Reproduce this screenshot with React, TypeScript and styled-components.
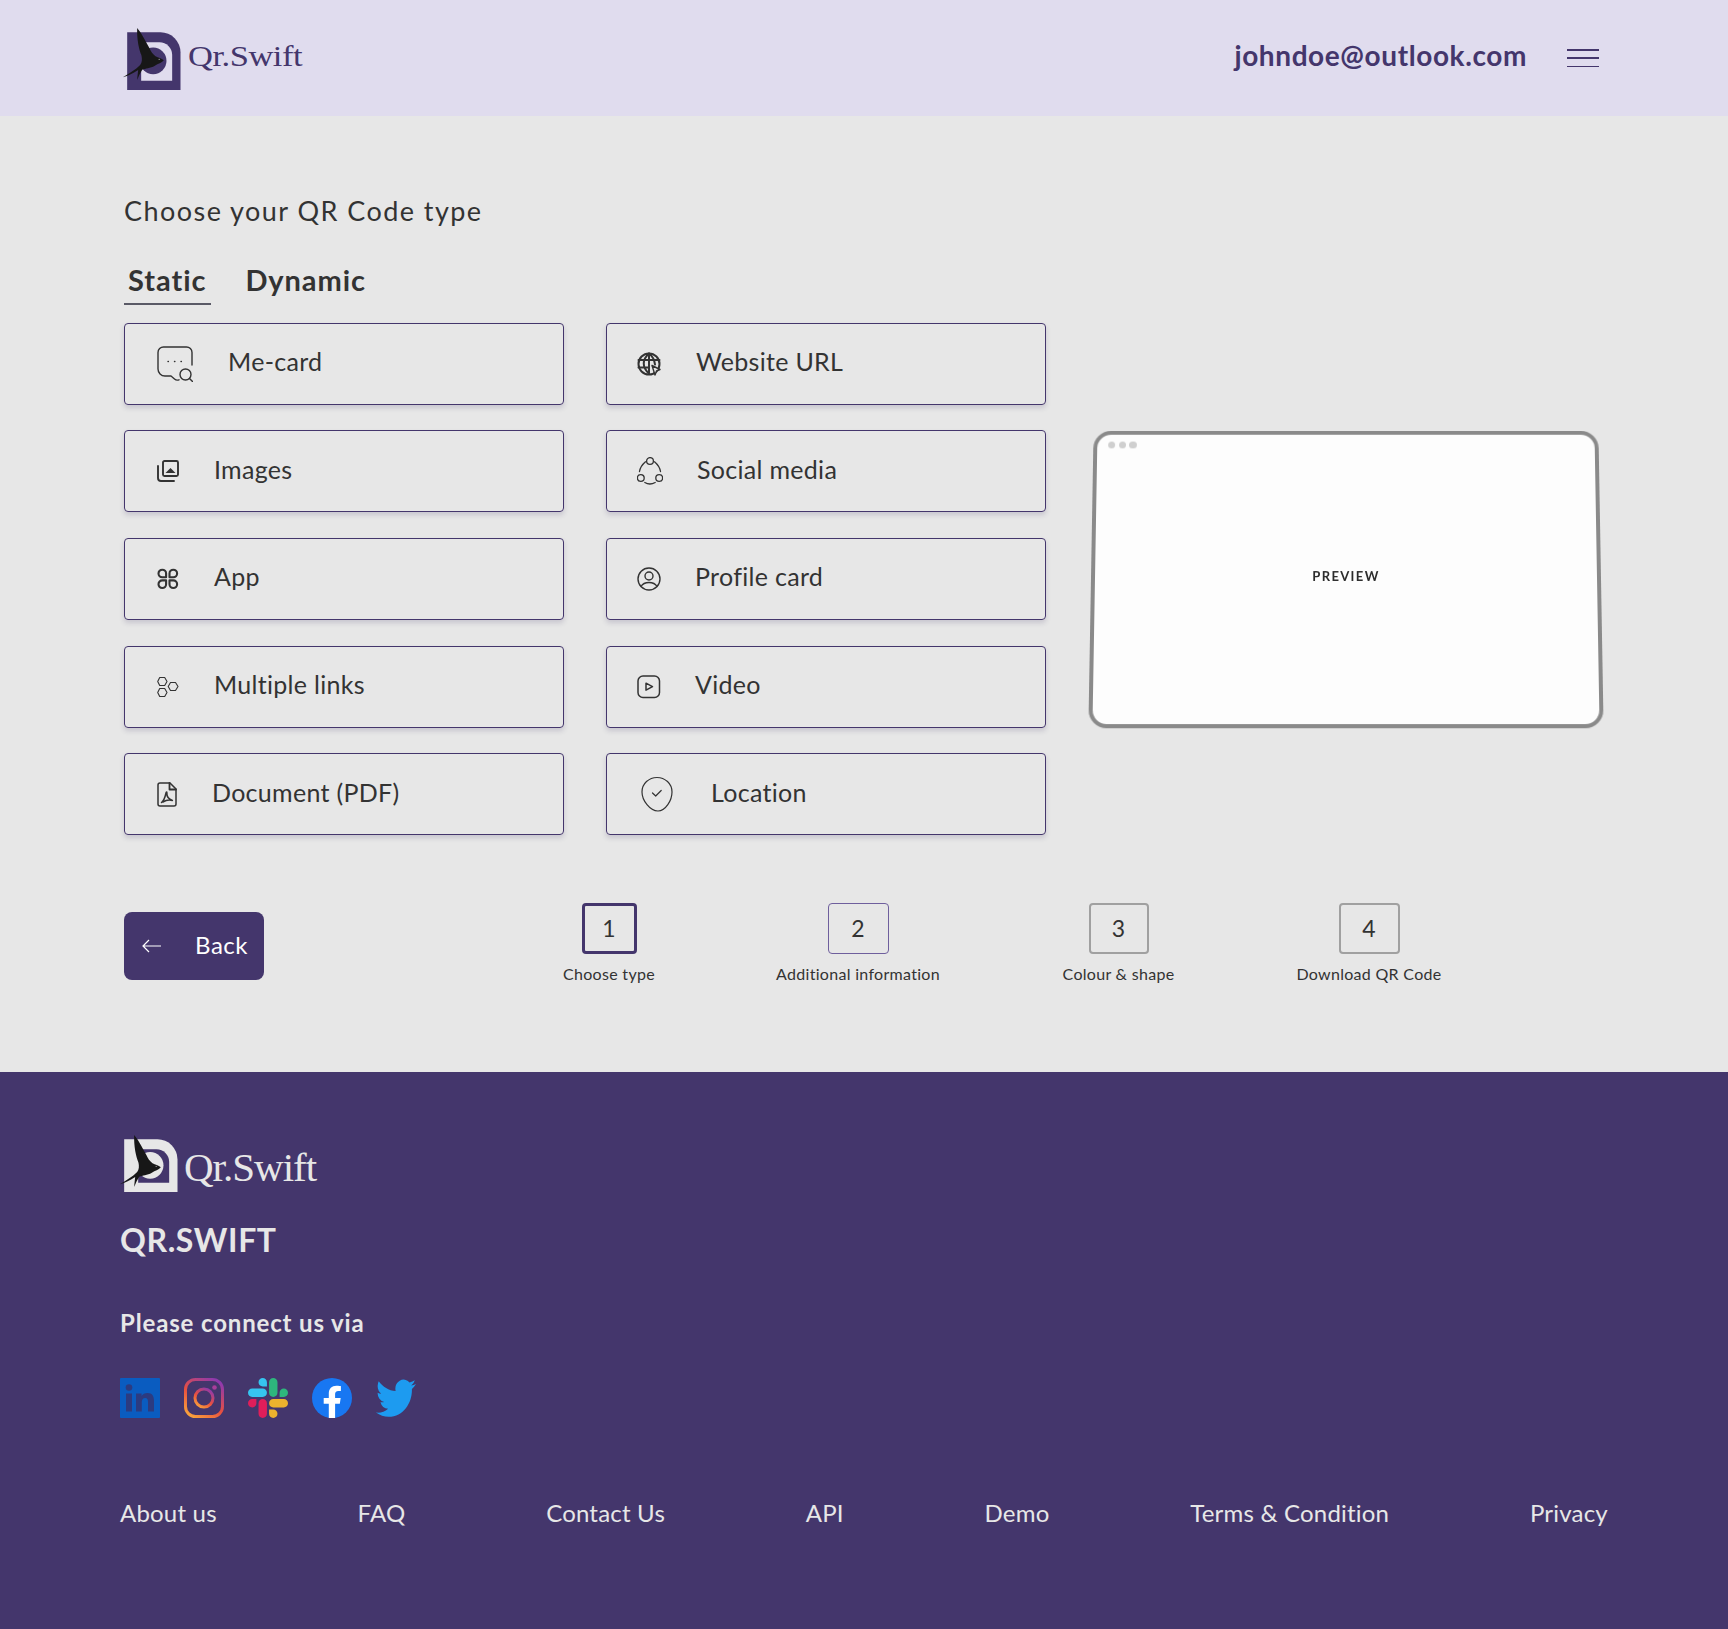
import React from "react";
import styled, { createGlobalStyle } from "styled-components";

const PURPLE = "#44366c";
const INK = "#333333";
const FONT = `Lato, "Open Sans", sans-serif`;

const Global = createGlobalStyle`
	html, body { margin: 0; padding: 0; background: #e7e7e7; }
	body { font-family: ${FONT}; color: ${INK}; }
	* { box-sizing: border-box; }
`

const Page = styled.div`
	width: 1728px;
	height: 1629px;
	display: flex;
	flex-direction: column;
	overflow: hidden;
`

const Header = styled.header`
	height: 116px;
	background: #e0dcee;
	display: flex;
	align-items: center;
	justify-content: space-between;
	padding: 0 129px 0 122px;
`

const LogoRow = styled.div`
	display: flex;
	align-items: center;
	margin-top: 1px;
`

const HeaderBrand = styled.span`
	display: inline-block;
	font-family: "Liberation Serif", serif;
	font-size: 29px;
	letter-spacing: -0.4px;
	color: ${PURPLE};
	margin: -5px 0 0 7px;
	transform: scaleX(1.19);
	transform-origin: left center;
`

const Account = styled.div`
	display: flex;
	align-items: center;
	gap: 40px;
`

const Email = styled.span`
	font-size: 28px;
	font-weight: 700;
	letter-spacing: 0.6px;
	color: ${PURPLE};
	margin-top: -7px;
`

const Burger = styled.div`
	width: 32px;
	height: 18px;
	display: flex;
	flex-direction: column;
	justify-content: space-between;
	span {
		display: block;
		height: 1.5px;
		background: ${PURPLE};
	}
`

const Main = styled.main`
	flex: 1;
	padding: 76px 0 0 124px;
`

const Title = styled.h1`
	margin: 0;
	font-size: 27px;
	line-height: 38px;
	font-weight: 400;
	letter-spacing: 1.45px;
`

const Tabs = styled.div`
	display: flex;
	gap: 30px;
	margin-top: 31px;
`

const Tab = styled.div<{ $active?: boolean }>`
	font-size: 29px;
	line-height: 38px;
	font-weight: 700;
	padding: 0 5px 4px 4px;
	letter-spacing: 0.95px;
	border-bottom: 2px solid ${p => (p.$active ? "#5a5a66" : "transparent")};
`

const Body = styled.div`
	display: flex;
	margin-top: 17.500px;
`

const TypeGrid = styled.div`
	display: grid;
	grid-template-columns: 440px 440px;
	grid-auto-rows: 82px;
	column-gap: 42px;
	row-gap: 25.700px;
`

const TypeCard = styled.div`
	display: flex;
	align-items: center;
	gap: 35px;
	padding: 0 0 0 32px;
	border: 1px solid ${PURPLE};
	border-radius: 4px;
	box-shadow: 0 3px 5px rgba(60, 50, 100, 0.18);
	font-size: 25px;
	letter-spacing: 0.3px;
	span { margin-top: -5px; }
	&:nth-child(even) {
		gap: 34px;
		padding-left: 30px;
	}
`

const PreviewWrap = styled.div`
	margin: 105.500px 0 0 45px;
`

const Preview = styled.div`
	position: relative;
	width: 510px;
	height: 300px;
	border: 4px solid #8a8a8a;
	border-radius: 18px;
	background: #fdfdfd;
	transform: perspective(2000px) rotateX(7.800deg);
	display: flex;
	align-items: center;
	justify-content: center;
	padding-bottom: 5px;
	font-size: 13px;
	font-weight: 700;
	letter-spacing: 1.350px;
	color: #2b2b2b;
`

const WindowDots = styled.div`
	position: absolute;
	top: 7px;
	left: 11px;
	display: flex;
	gap: 3.300px;
	i {
		width: 7.400px;
		height: 7.400px;
		border-radius: 50%;
		background: #cfcfcf;
	}
`

const Footbar = styled.div`
	display: flex;
	padding-top: 67.500px;
`

const BackButton = styled.div`
	width: 140px;
	height: 68px;
	margin-top: 9.500px;
	background: ${PURPLE};
	border-radius: 8px;
	color: #fff;
	display: flex;
	align-items: center;
	justify-content: space-between;
	padding: 0 16px 0 18px;
	font-size: 24px;
	letter-spacing: 0.5px;
`

const BackLabel = styled.span`
	margin-top: -4px;
`

const Steps = styled.div`
	display: flex;
	gap: 121px;
	margin-left: 300px;
`

const Step = styled.div<{ $w: number }>`
	width: ${p => p.$w}px;
	display: flex;
	flex-direction: column;
	align-items: center;
	font-size: 16px;
	letter-spacing: 0.3px;
	white-space: nowrap;
`

const borders = {
	current: `3px solid ${PURPLE}`,
	next: "1.500px solid #6f5f9d",
	idle: "2px solid #a0a0a0"
}

const StepBox = styled.div<{ $state: keyof typeof borders; $w: number }>`
	width: ${p => p.$w}px;
	height: 51px;
	border: ${p => borders[p.$state]};
	border-radius: 4px;
	display: flex;
	align-items: center;
	justify-content: center;
	font-size: 23px;
	margin-bottom: 10px;
`

const Footer = styled.footer`
	height: 557px;
	background: ${PURPLE};
	padding: 62px 120px 0 120px;
	color: #e7e7e7;
`

const FooterLogo = styled.div`
	display: flex;
	align-items: center;
	margin-left: -1px;
`

const FooterBrand = styled.span`
	font-family: "Liberation Serif", serif;
	font-size: 41px;
	letter-spacing: -1px;
	margin-left: 6px;
	margin-top: 7px;
`

const FooterTitle = styled.div`
	font-size: 32px;
	font-weight: 700;
	line-height: 40px;
	margin-top: 28px;
	letter-spacing: 0.6px;
`

const Connect = styled.div`
	font-size: 24px;
	font-weight: 700;
	line-height: 30px;
	margin-top: 48px;
	letter-spacing: 0.85px;
`

const Socials = styled.div`
	display: flex;
	gap: 24px;
	margin-top: 40px;
`

const FooterLinks = styled.nav`
	display: flex;
	justify-content: space-between;
	margin-top: 80px;
	font-size: 24px;
	letter-spacing: 0.2px;
`

const Logo = ({ mark, hole, bird = "#171717", h = 173 }: { mark: string; hole: string; bird?: string; h?: number }) => (
	<svg width={59} height={h === 173 ? 63 : 58} viewBox={`0 -16 176 ${h === 173 ? 189 : 174}`} style={{ flexShrink: 0, overflow: "visible" }}>
		<path d={`M15 0H115a60 60 0 0 1 60 60V${h}H15z`} fill={mark} />
		<path d={`M57 30H112a38 38 0 0 1 38 38V${h - 28}H57z`} fill={hole} />
		<circle cx="93" cy={h / 2 - 1} r="40" fill={mark} />
		<path d="M45 -13C60 5 72 30 82 48C86 58 92 66 100 72C108 76 118 78 125 84C118 92 108 94 98 100C84 108 70 108 60 112C54 122 49 132 45 143C46 130 47 122 48 113C34 122 18 130 2 135C20 124 40 112 54 98C60 90 60 80 58 70C50 50 44 22 45 -13z" fill={bird} />
		<circle cx="111" cy="81" r="1.600" fill="#ddd" />
	</svg>
)

const I = ({ w, h, children, sw = 1.3 }: { w: number; h: number; children: React.ReactNode; sw?: number }) => (
	<svg width={w} height={h} viewBox={`0 0 ${w} ${h}`} fill="none" stroke={INK} strokeWidth={sw} strokeLinecap="round" strokeLinejoin="round" style={{ flexShrink: 0 }}>
		{children}
	</svg>
)

const icons: Record<string, React.ReactNode> = {
	me: (
		<I w={36} h={36} sw={1.4}>
			<path d="M35 19V6.500A5.500 5.500 0 0 0 29.500 1H6.500A5.500 5.500 0 0 0 1 6.500V23a7 7 0 0 0 7 7h6l3.500 3q2 1.800 4.500.8" />
			<circle cx="28.500" cy="28.500" r="5.500" />
			<path d="M32.500 32.500L35.500 35.500" />
			<path d="M11 15.500h.4M17.500 15.500h.4M24 15.500h.4" />
		</I>
	),
	images: (
		<I w={22} h={22} sw={1.9}>
			<rect x="6" y="1" width="15" height="15" rx="1.500" />
			<path d="M1 6v12a3 3 0 0 0 3 3h13" />
			<path d="M8.500 13l5-5 5 5z" fill={INK} stroke="none" />
		</I>
	),
	app: (
		<I w={22} h={22} sw={2.100}>
			<path d="M1.500 5.500a3.800 3.800 0 0 1 7.600 0V9.300H5.300a3.800 3.800 0 0 1-3.800-3.800z" />
			<path d="M12.500 5.500a3.800 3.800 0 0 1 7.600 0 3.800 3.800 0 0 1-3.800 3.800H12.500z" />
			<path d="M1.500 16.200a3.800 3.800 0 0 1 3.800-3.800H9.100v3.800a3.800 3.800 0 0 1-7.600 0z" />
			<path d="M12.500 12.400h3.800a3.800 3.800 0 1 1-3.800 3.800z" />
		</I>
	),
	links: (
		<I w={22} h={22} sw={1.100}>
			<path d="M2 1.500h5l2.300 4-2.300 4H2l-2-4z" transform="translate(.7 0)" />
			<path d="M2 12.500h5l2.300 4-2.300 4H2l-2-4z" transform="translate(.7 0)" />
			<path d="M13 7h5l2.500 4-2.500 4h-5l-2.300-4z" transform="translate(.5 -.5)" />
		</I>
	),
	pdf: (
		<I w={20} h={25} sw={1.500}>
			<path d="M13 1H3a2 2 0 0 0-2 2v19a2 2 0 0 0 2 2h14a2 2 0 0 0 2-2V7z" />
			<path d="M12.500 1v6.500H19" strokeWidth="1.800" />
			<path d="M4.500 20.500c1.500-1 3.500-5 4.500-9.500.3-1.500 1-1 .9 0-.3 3 2 6 5.500 7.500-3-.8-7 0-9.500 1.500" />
		</I>
	),
	web: (
		<I w={25} h={24} sw={2}>
			<circle cx="12" cy="12" r="10.500" />
			<path d="M1.500 8h21M1.500 15.500h10M12 1.500v20M12 1.500c-7 6-7 14 0 20M12 1.500c4 3 5.500 7 6 11" />
			<path d="M15 13.500l8 4-3.500 1.500-1.500 4z" fill="#e7e7e7" strokeWidth="1.400" />
		</I>
	),
	social: (
		<I w={26} h={28} sw={1.300}>
			<circle cx="13" cy="4" r="3.400" />
			<circle cx="3.800" cy="21" r="3.400" />
			<circle cx="22.200" cy="21" r="3.400" />
			<path d="M8.500 4.800Q3.500 9 2.500 14.500M17.500 4.800q5 4.200 6 9.700M7.800 25.500q5 3 10.400 0" />
		</I>
	),
	profile: (
		<I w={24} h={24} sw={1.400}>
			<circle cx="12" cy="12" r="11" />
			<circle cx="12" cy="9" r="4" />
			<path d="M4 19.500C6 16 9 15.500 12 15.500s6 .5 8 4" />
		</I>
	),
	video: (
		<I w={24} h={24} sw={1.500}>
			<rect x="1" y="1" width="21.500" height="21.500" rx="5" />
			<path d="M9 8.200l6.500 3.500L9 15.200z" />
		</I>
	),
	location: (
		<I w={40} h={36} sw={1.200}>
			<path d="M20 1.500c8 0 15 6 15 14.500 0 8.500-6.500 19-14 19C13 35 5 24.500 5 16 5 7.500 12 1.500 20 1.500z" />
			<path d="M15.500 17l3.200 3 5.500-5.500" />
		</I>
	)
}

const LinkedIn = () => (
	<svg width="40" height="40" viewBox="0 0 40 40">
		<rect width="40" height="40" rx="1" fill="#0a5cc0" />
		<rect x="6" y="15.500" width="6" height="18" fill="#2c3b80" />
		<circle cx="9" cy="9.500" r="3.300" fill="#2c3b80" />
		<path d="M16 15.500h5.600V18c1.200-1.800 3-3 5.900-3 5 0 6.500 3.300 6.500 8v10.500h-6v-9.500c0-2.300-.5-4-2.800-4-2.400 0-3.400 1.800-3.400 4v9.500H16z" fill="#2c3b80" />
	</svg>
)

const Instagram = () => (
	<svg width="40" height="40" viewBox="0 0 40 40" fill="none">
		<defs>
			<linearGradient id="ig" x1="0.15" y1="1" x2="0.8" y2="0">
				<stop offset="0" stopColor="#f9a13b" />
				<stop offset="0.45" stopColor="#e8503f" />
				<stop offset="1" stopColor="#8f39ad" />
			</linearGradient>
		</defs>
		<rect x="1.500" y="1.500" width="37" height="37" rx="10" stroke="url(#ig)" strokeWidth="3" />
		<circle cx="20" cy="20" r="9" stroke="url(#ig)" strokeWidth="3" />
		<circle cx="30.500" cy="9.500" r="2.300" fill="#a93d9b" />
	</svg>
)

const Slack = () => (
	<svg width="40" height="40" viewBox="0 0 122.8 122.8">
		<path fill="#E01E5A" d="M25.800 77.600c0 7.100-5.800 12.900-12.900 12.900S0 84.700 0 77.600s5.800-12.900 12.900-12.900h12.900v12.900zM32.300 77.600c0-7.100 5.800-12.900 12.900-12.900s12.900 5.800 12.900 12.900v32.300c0 7.100-5.800 12.900-12.900 12.900s-12.900-5.800-12.900-12.900V77.600z" />
		<path fill="#36C5F0" d="M45.200 25.800c-7.100 0-12.900-5.800-12.900-12.900S38.100 0 45.200 0s12.900 5.800 12.900 12.900v12.900H45.200zM45.200 32.300c7.100 0 12.900 5.800 12.900 12.900s-5.800 12.900-12.900 12.900H12.900C5.800 58.100 0 52.300 0 45.200s5.800-12.900 12.900-12.900h32.300z" />
		<path fill="#2EB67D" d="M97 45.200c0-7.100 5.800-12.900 12.900-12.900s12.900 5.800 12.900 12.900-5.800 12.900-12.900 12.900H97V45.200zM90.500 45.200c0 7.100-5.800 12.900-12.900 12.900s-12.900-5.800-12.900-12.900V12.900C64.700 5.800 70.500 0 77.600 0s12.900 5.800 12.900 12.900v32.300z" />
		<path fill="#ECB22E" d="M77.600 97c7.100 0 12.900 5.800 12.900 12.900s-5.800 12.900-12.900 12.900-12.900-5.800-12.900-12.900V97h12.900zM77.600 90.500c-7.100 0-12.900-5.800-12.900-12.900s5.800-12.900 12.900-12.900h32.300c7.100 0 12.900 5.800 12.900 12.900s-5.800 12.900-12.900 12.900H77.600z" />
	</svg>
)

const Facebook = () => (
	<svg width="40" height="40" viewBox="0 0 40 40">
		<circle cx="20" cy="20" r="20" fill="#1877f2" />
		<path fill="#fff" d="M27.800 25.800l.9-5.800h-5.600v-3.800c0-1.600.8-3.100 3.300-3.100h2.500V8.200s-2.300-.4-4.500-.4c-4.600 0-7.600 2.800-7.600 7.800V20h-5.100v5.800h5.100v14.200a20 20 0 0 0 6.300 0V25.800z" />
	</svg>
)

const Twitter = () => (
	<svg width="40" height="40" viewBox="0 1.400 24 21" preserveAspectRatio="none">
		<path fill="#1d9bf0" d="M23.953 4.570a10 10 0 01-2.825.775 4.958 4.958 0 002.163-2.723c-.951.555-2.005.959-3.127 1.184a4.920 4.920 0 00-8.384 4.482C7.690 8.095 4.067 6.130 1.640 3.162a4.822 4.822 0 00-.666 2.475c0 1.710.870 3.213 2.188 4.096a4.904 4.904 0 01-2.228-.616v.060a4.923 4.923 0 003.946 4.827 4.996 4.996 0 01-2.212.085 4.936 4.936 0 004.604 3.417 9.867 9.867 0 01-6.102 2.105c-.390 0-.779-.023-1.170-.067a13.995 13.995 0 007.557 2.209c9.053 0 13.998-7.496 13.998-13.985 0-.210 0-.420-.015-.630A9.935 9.935 0 0024 4.590z" />
	</svg>
)

const types = [
	["me", "Me-card"],
	["web", "Website URL"],
	["images", "Images"],
	["social", "Social media"],
	["app", "App"],
	["profile", "Profile card"],
	["links", "Multiple links"],
	["video", "Video"],
	["pdf", "Document (PDF)"],
	["location", "Location"]
]

const steps: { n: number; w: number; cw: number; label: string; state: keyof typeof borders }[] = [
	{ n: 1, w: 55, cw: 90, label: "Choose type", state: "current" },
	{ n: 2, w: 61, cw: 166, label: "Additional information", state: "next" },
	{ n: 3, w: 60, cw: 113, label: "Colour & shape", state: "idle" },
	{ n: 4, w: 61, cw: 146, label: "Download QR Code", state: "idle" }
]

const links = ["About us", "FAQ", "Contact Us", "API", "Demo", "Terms & Condition", "Privacy"]

const App = () => {
	return (
		<Page>
			<Global />
			<Header>
				<LogoRow>
					<Logo mark={PURPLE} hole="#e0dcee" />
					<HeaderBrand>Qr.Swift</HeaderBrand>
				</LogoRow>
				<Account>
					<Email>johndoe@outlook.com</Email>
					<Burger>
						<span />
						<span />
						<span />
					</Burger>
				</Account>
			</Header>
			<Main>
				<Title>Choose your QR Code type</Title>
				<Tabs>
					<Tab $active>Static</Tab>
					<Tab>Dynamic</Tab>
				</Tabs>
				<Body>
					<TypeGrid>
						{types.map(([icon, label]) => (
							<TypeCard key={label}>
								{icons[icon]}
								<span>{label}</span>
							</TypeCard>
						))}
					</TypeGrid>
					<PreviewWrap>
						<Preview>
							<WindowDots>
								<i />
								<i />
								<i />
							</WindowDots>
							PREVIEW
						</Preview>
					</PreviewWrap>
				</Body>
				<Footbar>
					<BackButton>
						<svg width="20" height="14" viewBox="0 0 20 14" fill="none" stroke="#fff" strokeWidth="1.200">
							<path d="M19 7H1M7 1L1 7l6 6" />
						</svg>
						<BackLabel>Back</BackLabel>
					</BackButton>
					<Steps>
						{steps.map(s => (
							<Step key={s.n} $w={s.cw}>
								<StepBox $state={s.state} $w={s.w}>{s.n}</StepBox>
								{s.label}
							</Step>
						))}
					</Steps>
				</Footbar>
			</Main>
			<Footer>
				<FooterLogo>
					<Logo mark="#e7e7e7" hole={PURPLE} h={158} />
					<FooterBrand>Qr.Swift</FooterBrand>
				</FooterLogo>
				<FooterTitle>QR.SWIFT</FooterTitle>
				<Connect>Please connect us via</Connect>
				<Socials>
					<LinkedIn />
					<Instagram />
					<Slack />
					<Facebook />
					<Twitter />
				</Socials>
				<FooterLinks>
					{links.map(l => (
						<span key={l}>{l}</span>
					))}
				</FooterLinks>
			</Footer>
		</Page>
	)
}

export default App;
